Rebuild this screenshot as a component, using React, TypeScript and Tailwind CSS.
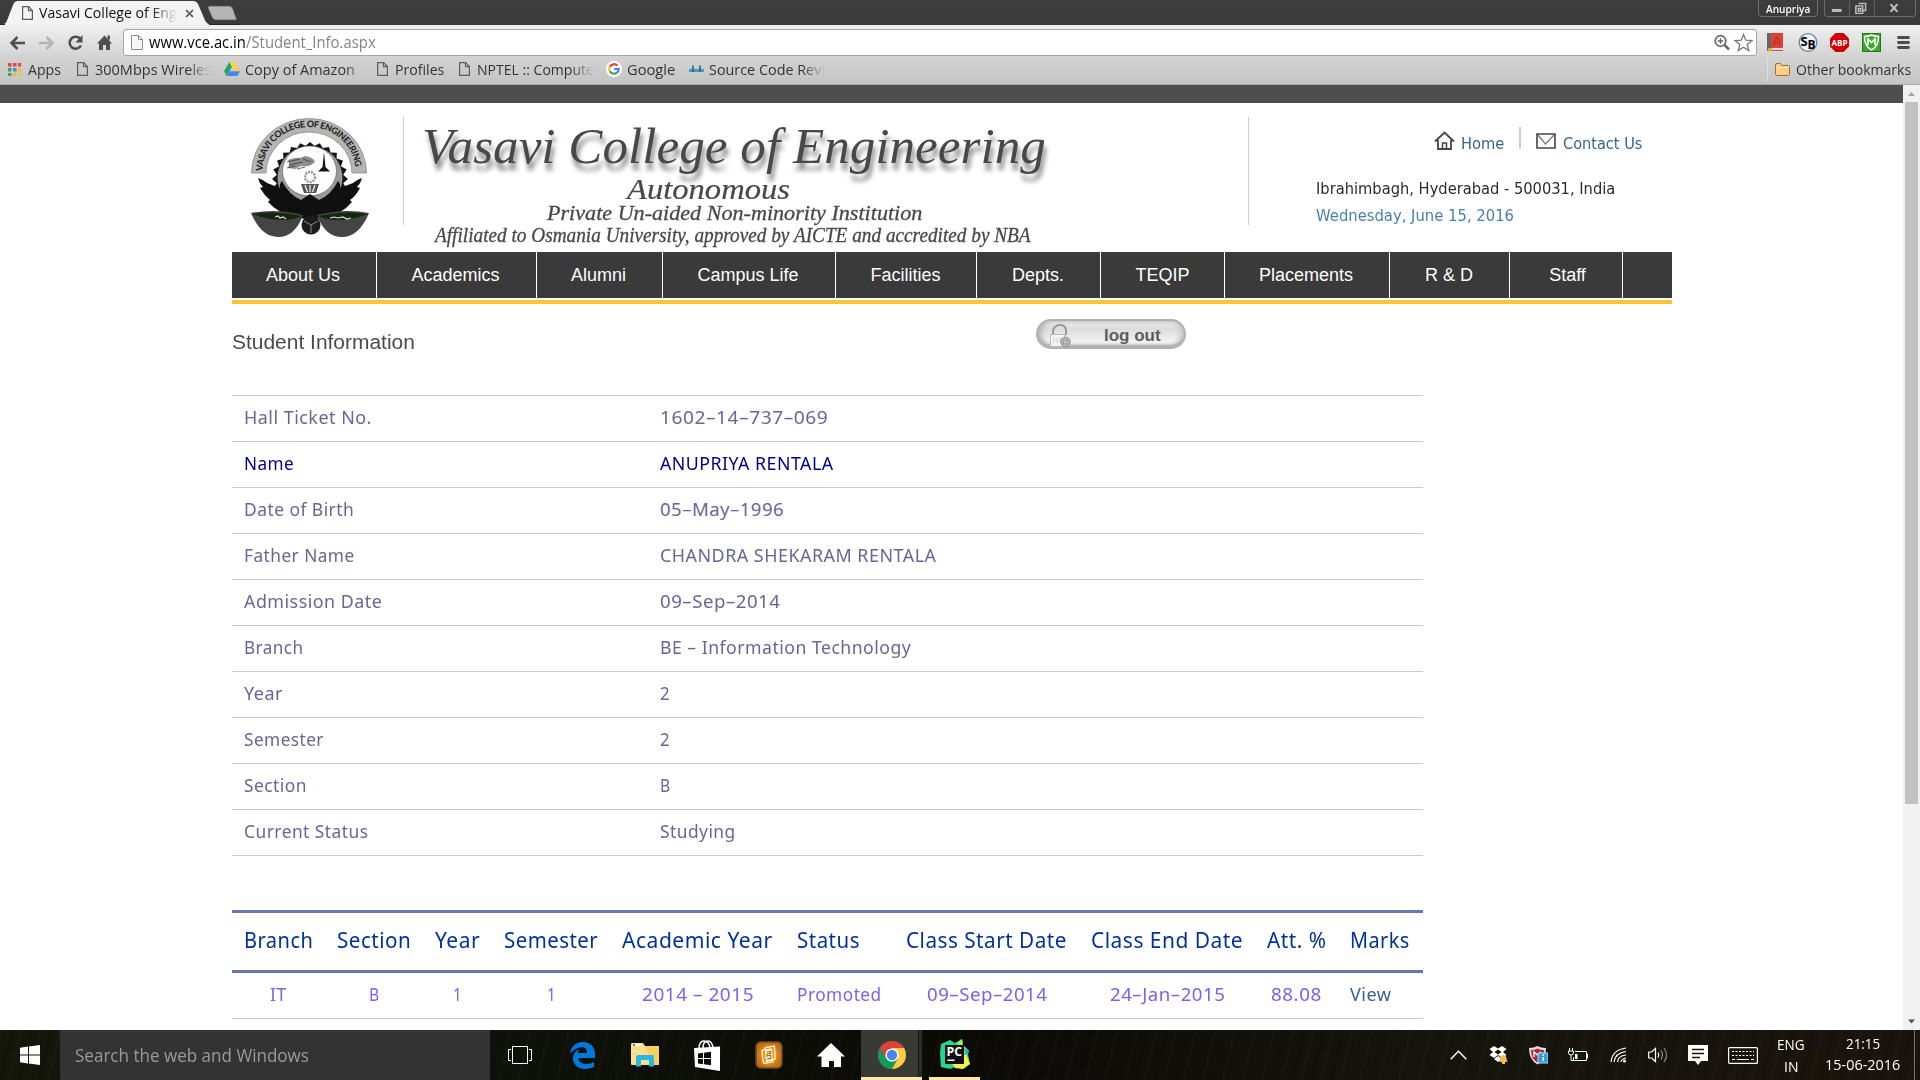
import { useLayoutEffect, useRef, useState, type ReactNode } from 'react';

/* Text squeezed or stretched horizontally to a given advance width. */
function Fit({ w, className = '', children }: { w: number; className?: string; children: ReactNode }) {
  const ref = useRef<HTMLSpanElement>(null);
  const [scale, setScale] = useState(1);
  useLayoutEffect(() => {
    if (ref.current && ref.current.offsetWidth) setScale(w / ref.current.offsetWidth);
  }, [w]);
  return (
    <span className={`block shrink-0 whitespace-nowrap ${className}`} style={{ width: w }}>
      <span ref={ref} className="inline-block origin-left whitespace-pre" style={{ transform: `scaleX(${scale})` }}>
        {children}
      </span>
    </span>
  );
}

function FileIcon({ className = '' }: { className?: string }) {
  return (
    <svg className={`shrink-0 ${className}`} width="11" height="14" viewBox="0 0 11 14" fill="none" stroke="#5c5c5c" strokeWidth="1.200">
      <path d="M.600.600h6l3.800 4v8.800H.600z" />
      <path d="M6.500.600v4h4" />
    </svg>
  );
}

function GoogleIcon() {
  return (
    <svg width="16" height="16" viewBox="0 0 16 16" className="shrink-0" fill="none" strokeWidth="2.200">
      <circle cx="8" cy="8" r="8" fill="#fff" />
      <path d="M11.400 4.600A4.800 4.800 0 0 0 3.800 5.800" stroke="#ea4335" />
      <path d="M3.800 5.800a4.800 4.800 0 0 0 0 4.400" stroke="#fbbc05" />
      <path d="M3.800 10.200a4.800 4.800 0 0 0 7.200 1.500" stroke="#34a853" />
      <path d="M11 11.700A4.800 4.800 0 0 0 12.800 8H8.200" stroke="#4285f4" />
    </svg>
  );
}

const fade = '[mask-image:linear-gradient(90deg,#000_80%,transparent_100%)]';

function TitleBar() {
  return (
    <div className="relative flex h-[25px] items-start bg-linear-to-b from-[#3d3d3d] to-[#3a3a3a]">
      <svg width="240" height="25" viewBox="0 0 240 25" className="absolute left-0 top-0">
        <path d="M0 25C6 24 6 23 8 18L13 5Q14.500 1 18 1H193Q197 1 198.500 5L204 18Q206 24 211 25z" fill="#f3f3f3" />
        <path d="M0 24.500H5M209 24.500H240" stroke="#262626" />
        <path d="M210 6h19q3 0 4 3l3.500 10q.5 1-1.500 1h-19q-3 0-4-3l-4-9q-.5-2 2-2z" fill="#b5b5b5" stroke="#555" strokeWidth=".7" />
      </svg>
      <div className="relative flex w-[212px] items-center pl-[22px] pt-[2px] text-[#111]">
        <FileIcon />
        <Fit w={138} className={`ml-[6px] h-[22px] text-[15px] leading-[21px] ${fade}`}>Vasavi College of Eng</Fit>
        <svg width="9" height="9" viewBox="0 0 9 9" className="ml-[8px]" stroke="#555" strokeWidth="1.700">
          <path d="M1 1l7 7M8 1L1 8" />
        </svg>
      </div>
      <div className="ml-auto mr-[6px] flex h-[17px] rounded-b border border-t-0 border-[#6d6d6d]">
        <Fit w={44} className="mx-[7px] text-[11.5px] font-semibold leading-[17px] text-white">Anupriya</Fit>
      </div>
      <div className="mr-[4px] flex h-[17px] w-[92px] rounded-b border border-t-0 border-[#6d6d6d]">
        <svg width="92" height="16" viewBox="0 0 92 16" fill="none" stroke="#bdbdbd" strokeWidth="1.500">
          <path d="M25 0v16M50.500 0v16" stroke="#666" strokeWidth="1" />
          <rect x="7" y="9" width="10" height="3" fill="#bdbdbd" stroke="none" />
          <path d="M34.500 3.500h7v7h-2.500M31.500 6h7v7.500h-7zM34 8.500h2.500v2.500H34z" />
          <path d="M67 4l7 8M74 4l-7 8" strokeWidth="2.200" />
        </svg>
      </div>
    </div>
  );
}

function Toolbar() {
  return (
    <div className="flex h-[32px] items-center bg-linear-to-b from-[#f0f0f0] to-[#d3d3d3] pt-[3px]">
      <svg width="123" height="28" viewBox="0 29 123 28" className="shrink-0" fill="none" stroke="#4f4f4f" strokeWidth="2.600">
        <path d="M25 43H12M17.500 37L11.500 43l6 6" />
        <path d="M39 43h13M46.500 37l6 6-6 6" stroke="#b3b3b3" />
        <path d="M80.500 39.200A6 6 0 1 0 81 45.500" />
        <path d="M82.500 35v7.500H75.500z" fill="#4f4f4f" stroke="none" />
        <path d="M97 43.500l7.500-8 7.500 8h-2V50h-4v-5h-3v5h-4v-6.500zM107.500 35.500h2.500v4h-2.500z" fill="#4f4f4f" stroke="none" />
      </svg>
      <div className="flex h-[27px] w-[1634px] shrink-0 items-center rounded-[3px] border border-[#a5a5a5] bg-white pl-[7px]">
        <svg width="12" height="15" viewBox="0 0 12 15" fill="#f5f5f5" stroke="#8b8b8b">
          <path d="M.5.500h7l4 4v10H.5zM7.500.500v4h4" />
        </svg>
        <Fit w={97} className="-mt-px ml-[6px] text-[16px] leading-6 text-black">www.vce.ac.in</Fit>
        <Fit w={130} className="-mt-px text-[16px] leading-6 text-[#848484]">/Student_Info.aspx</Fit>
        <svg width="40" height="22" viewBox="0 0 40 22" className="ml-auto mr-[3px]" fill="none" stroke="#666">
          <circle cx="7.500" cy="9" r="5.300" strokeWidth="1.700" />
          <path d="M11.500 13l4.500 4.500" strokeWidth="2.500" />
          <path d="M4.700 9h5.600M7.500 6.200v5.600" strokeWidth="1.300" />
          <path d="M30.500 2.500l2.300 5.700 6.200.4-4.800 4 1.600 6-5.300-3.400-5.300 3.400 1.600-6-4.800-4 6.200-.4z" stroke="#777" strokeWidth="1.300" />
        </svg>
      </div>
      <svg width="163" height="28" viewBox="1757 29 163 28" className="shrink-0">
        <path d="M1767 33h4v18h-4z" fill="#666" />
        <path d="M1771 33h12v15h-12zM1772 50h11v1h-11z" fill="#dc4437" />
        <path d="M1768 48h4v4l-2-1.500-2 1.500z" fill="#e9a72b" />
        <text x="1772" y="46" fontSize="14" fontWeight="bold" fill="#c4362c">A</text>
        <circle cx="1808" cy="42.500" r="8.800" fill="#eef3f8" stroke="#6b87a5" strokeWidth="1.300" />
        <text x="1800.500" y="46" fontSize="13" fontWeight="bold">S</text>
        <text x="1807.500" y="48.500" fontSize="12" fontWeight="bold">B</text>
        <path d="M1835.500 33h8l5.500 5.500v8l-5.500 5.500h-8l-5.500-5.500v-8z" fill="#cf0000" />
        <text x="1831.500" y="46.300" fontSize="9.500" fontWeight="bold" fill="#fff" textLength="16" lengthAdjust="spacingAndGlyphs">ABP</text>
        <rect x="1862.500" y="33.500" width="18" height="18" fill="#3da829" stroke="#23771a" />
        <path d="M1864.500 36.500q4 0 7-1.500 3 1.500 7 1.500 0 10-7 13.500-7-3.500-7-13.500z" fill="#3da829" stroke="#fff" strokeWidth="1.500" />
        <path d="M1868 45v-6l3.500 3.500L1875 39v6" fill="none" stroke="#fff" strokeWidth="1.700" />
        <path d="M1898.500 37.500h10M1898.500 42.500h10M1898.500 47.500h10" stroke="#4c4c4c" strokeWidth="2.800" strokeLinecap="round" />
      </svg>
    </div>
  );
}

function Bookmarks() {
  const label = 'text-[15px] leading-6 text-[#333]';
  return (
    <div className="flex h-[28px] items-center border-b border-[#a6a6a6] bg-linear-to-b from-[#d2d2d2] to-[#c5c5c5] pb-[3px] pl-[8px]">
      <div className="flex w-[69px] items-center">
        <svg width="13" height="13" viewBox="0 0 13 13" className="shrink-0">
          <path d="M0 0h3.500v3.500H0zM5 0h3.500v3.500H5zM10 0h3v3.500h-3z" fill="#e8453c" />
          <path d="M0 5h3.500v3.500H0zM0 10h3.500v3H0z" fill="#3aa757" />
          <path d="M5 5h3.500v3.500H5z" fill="#4688f1" />
          <path d="M10 5h3v3.500h-3zM10 10h3v3h-3zM5 10h3.500v3H5z" fill="#f9bb2d" />
        </svg>
        <Fit w={33} className={`ml-[7px] ${label}`}>Apps</Fit>
      </div>
      <div className="flex w-[147px] items-center">
        <FileIcon />
        <Fit w={116} className={`ml-[7px] ${label} ${fade}`}>300Mbps Wireles</Fit>
      </div>
      <div className="flex w-[153px] items-center">
        <svg width="16" height="14" viewBox="0 0 16 14" className="shrink-0">
          <path d="M5.300 0L0 9.300 2.700 14 8 4.700z" fill="#23a566" />
          <path d="M5.300 0h5.400L16 9.300h-5.400z" fill="#ffd04b" />
          <path d="M5.300 9.300H16L13.300 14H2.700z" fill="#4688f4" />
        </svg>
        <Fit w={110} className={`ml-[5px] ${label} [mask-image:linear-gradient(90deg,#000_90%,rgba(0,0,0,.6)_100%)]`}>Copy of Amazon</Fit>
      </div>
      <div className="flex w-[82px] items-center">
        <FileIcon />
        <Fit w={49} className={`ml-[7px] ${label}`}>Profiles</Fit>
      </div>
      <div className="flex w-[147px] items-center">
        <FileIcon />
        <Fit w={117} className={`ml-[7px] ${label} ${fade}`}>NPTEL :: Compute</Fit>
      </div>
      <div className="flex w-[83px] items-center">
        <GoogleIcon />
        <Fit w={48} className={`ml-[5px] ${label}`}>Google</Fit>
      </div>
      <div className="flex items-center">
        <svg width="15" height="8" viewBox="0 0 15 8" className="shrink-0">
          <path d="M0 4h2l2-1 1 1h5l1-1 2 1h2v3H0z" fill="#4f9ab3" />
          <path d="M3.300.5h1.400V7H3.300zM10.300.5h1.400V7h-1.400z" fill="#17627a" />
        </svg>
        <Fit w={116} className={`ml-[5px] ${label} ${fade}`}>Source Code Revi</Fit>
      </div>
      <div className="ml-auto mr-[9px] flex h-6 items-center border-l border-[#dcdfe4] pl-[7px]">
        <svg width="15" height="13" viewBox="0 0 15 13" className="shrink-0" stroke="#a5712b">
          <path d="M.5 11V2Q.5.500 2 .500h3.500l1.500 2h6.500q1 0 1 1V11q0 1.500-1 1.500H2Q.5 12.500.5 11z" fill="#fbcf82" />
          <path d="M1.500 4.500h12" stroke="#fdecc8" />
        </svg>
        <Fit w={115} className={`ml-[6px] ${label}`}>Other bookmarks</Fit>
      </div>
    </div>
  );
}

function CollegeCrest() {
  const teeth = Array.from({ length: 24 }, (_, i) => {
    const a = (i * Math.PI) / 12 - Math.PI / 2;
    const b = a + Math.PI / 24;
    return `${59 + 38 * Math.cos(a)},${61 + 37 * Math.sin(a)} ${59 + 33.500 * Math.cos(b)},${61 + 33.500 * Math.sin(b)}`;
  }).join(' ');
  return (
    <svg width="120" height="120" viewBox="0 0 120 120" className="mt-px shrink-0">
      <path d="M.5 55A57 54 0 0 1 115.500 55H101A43 41 0 0 0 15 55z" fill="#b5b5b5" stroke="#8a8a8a" strokeWidth=".8" />
      <path id="crest-arc" d="M11.500 53A46.500 44 0 0 1 104.500 53" fill="none" />
      <text fontFamily="Lato" fontSize="9" fontWeight="900" fill="#262626">
        <textPath href="#crest-arc" textLength="138">VASAVI COLLEGE OF ENGINEERING</textPath>
      </text>
      <polygon points={teeth} fill="#141414" />
      <ellipse cx="59" cy="60" rx="32.500" ry="32" fill="#9a9a9a" />
      <ellipse cx="58.500" cy="53" rx="27" ry="25" fill="#fdfdfd" stroke="#555" strokeWidth=".6" />
      <path d="M37 42q8-3 12-2l5-2q8 1 10 6l-4 3q-4 2-10 1l-6 3-7-1q2-4 0-8z" fill="#8d8d8d" />
      <path d="M36 44l13-3M38 47l14-3M36 50l8-2M46 51l8-2M52 41l8 3" stroke="#3a3a3a" strokeWidth=".8" />
      <path d="M73 34l1.500 15 4.500 4.500H67l4.500-4.500z" fill="#151515" />
      <circle cx="59" cy="59" r="5" fill="none" stroke="#999" strokeWidth="2.500" strokeDasharray="2 1" />
      <path d="M50 66h18l-3 9H53z" fill="#555" />
      <path d="M54 67l2.500 7M59 67v7M64 67l-2.500 7" stroke="#eee" strokeWidth="1.300" />
      <path d="M59 76l9 6q12-5 19-19 3 3 2 7l13-5q3-3 9-5-1 5-5 9l3 1q-4 8-10 12l2 2q-11 13-27 15-15 4-30 0-16-3-27-15l2-2q-6-5-10-12l3-1q-4-4-5-9 6 2 9 5l13 5q-1-4 2-7 7 14 19 19z" fill="#101010" />
      <path d="M0 95q25-5 52 2-8 22-25 22Q10 119 0 95z" fill="#444" />
      <path d="M118 95q-25-5-52 2 8 22 25 22 17 0 27-24z" fill="#444" />
      <path d="M1 96q25-4 50 2-20 9-50-2zM117 96q-25-4-50 2 20 9 50-2z" fill="#12290c" />
      <path d="M24 99l3-1 2 2 3-1 3 2M79 100l4-1 4 1 5-1 4 2 4-1" fill="none" stroke="#ddd" strokeWidth="1.200" />
      <circle cx="60" cy="107" r="9.500" fill="#1c1c1c" />
      <path d="M53 103l7 4 7-4M60 107v8" fill="none" stroke="#888" strokeWidth="1" />
    </svg>
  );
}

function Header() {
  return (
    <header className="flex h-[149px] w-[1440px] pt-[14px]">
      <div className="w-[171px] pl-[19px]"><CollegeCrest /></div>
      <div className="h-[108px] w-px bg-[#cfcfcf]" />
      <div className="w-[844px] font-['Liberation_Serif',serif] italic text-[#484848]">
        <Fit w={624} className="ml-[18px] h-[58px] text-[51px] leading-[58px] [text-shadow:2px_7px_5px_rgba(0,0,0,.5)]">Vasavi College of Engineering</Fit>
        <Fit w={163} className="ml-[223px] mt-[2px] h-[24px] text-[29px] leading-[24px] [-webkit-text-stroke:.2px]">Autonomous</Fit>
        <Fit w={375} className="ml-[143px] mt-px h-[22px] text-[22px] leading-[22px] [-webkit-text-stroke:.3px]">Private Un-aided Non-minority Institution</Fit>
        <Fit w={596} className="ml-[31px] h-[22px] text-[20px] leading-[22px] [-webkit-text-stroke:.3px]">Affiliated to Osmania University, approved by AICTE and accredited by NBA</Fit>
      </div>
      <div className="h-[108px] w-px bg-[#cfcfcf]" />
      <div className="pl-[67px] pt-[10px] font-['DejaVu_Sans',sans-serif] text-[16px] leading-[26px]">
        <div className="flex h-[45px] pl-[118px] text-[#34648f]">
          <svg width="21" height="19" viewBox="0 0 21 19" className="mt-[4px]" fill="none" stroke="#444" strokeWidth="1.800">
            <path d="M1 10.500L10.500 1.500l9.500 9M4 9v9h13V9" />
            <path d="M8.500 18v-6h4v6" strokeWidth="1.500" />
          </svg>
          <Fit w={43} className="ml-[6px] pt-[4px]">Home</Fit>
          <div className="ml-[15px] h-[22px] w-[2px] bg-[#ccc]" />
          <svg width="20" height="16" viewBox="0 0 20 16" className="ml-[15px] mt-[6px]" fill="none" stroke="#444" strokeWidth="1.600">
            <path d="M1 1h18v14H1z" />
            <path d="M2 2l7.500 9L18 2" stroke="#777" strokeWidth="1.300" />
          </svg>
          <Fit w={79} className="ml-[7px] pt-[4px]">Contact Us</Fit>
        </div>
        <Fit w={299} className="h-[27px] pt-[4px] text-[#2b2b2b]">Ibrahimbagh, Hyderabad - 500031, India</Fit>
        <Fit w={198} className="pt-[4px] text-[#4680b0]">Wednesday, June 15, 2016</Fit>
      </div>
    </header>
  );
}

function Nav() {
  const item = 'flex items-center justify-center border-r border-white';
  return (
    <nav className="w-[1440px] border-b-4 border-[#f9c535] pb-[2px]">
      <div className="flex h-[46px] bg-[#3a3a3a] font-['Liberation_Sans',sans-serif] text-[18px] text-white">
        <div className={`w-[145px] pr-[2px] ${item}`}>About Us</div>
        <div className={`w-[160px] pr-[2px] ${item}`}>Academics</div>
        <div className={`w-[126px] pr-[2px] ${item}`}>Alumni</div>
        <div className={`w-[173px] pr-[2px] ${item}`}>Campus Life</div>
        <div className={`w-[141px] pr-px ${item}`}>Facilities</div>
        <div className={`w-[124px] pr-px ${item}`}>Depts.</div>
        <div className={`w-[124px] ${item}`}>TEQIP</div>
        <div className={`w-[165px] pr-[2px] ${item}`}>Placements</div>
        <div className={`w-[120px] pr-px ${item}`}>R &amp; D</div>
        <div className={`w-[113px] pl-[3px] ${item}`}>Staff</div>
      </div>
    </nav>
  );
}

function LogoutButton() {
  return (
    <div className="flex h-[30px] w-[150px] items-center rounded-full border-2 border-[#b0b0b0] bg-linear-to-b from-[#f4f4f4] via-[#dcdcdc] via-30% to-[#fdfdfd] shadow-[inset_0_-2px_3px_#aaa,inset_4px_0_5px_#bbb,inset_-4px_0_5px_#ccc]">
      <svg width="26" height="26" viewBox="0 0 26 26" className="ml-[11px] mt-[3px]" fill="none" stroke="#999">
        <path d="M4 12V8q1-6 7-6 6 0 6 6v4" strokeWidth="2" />
        <rect x="1.500" y="11.500" width="14" height="12" fill="#f4f4f4" stroke="#bbb" />
        <path d="M5 15v5M8 15v5M11 14v4" stroke="#ccc" />
        <circle cx="16.500" cy="19" r="4.500" fill="#c4c4c4" strokeWidth="1.500" />
        <path d="M14.500 17h4v4h-4z" />
      </svg>
      <Fit w={57} className="ml-[29px] mt-[4px] font-['Liberation_Sans',sans-serif] text-[17px] font-bold leading-6 text-[#5c5c5c]">log out</Fit>
    </div>
  );
}

const info: [string, number, string, number][] = [
  ['Hall Ticket No.', 128, '1602–14–737–069', 168],
  ['Name', 50, 'ANUPRIYA RENTALA', 174],
  ['Date of Birth', 110, '05–May–1996', 124],
  ['Father Name', 111, 'CHANDRA SHEKARAM RENTALA', 276],
  ['Admission Date', 138, '09–Sep–2014', 120],
  ['Branch', 59, 'BE – Information Technology', 251],
  ['Year', 39, '2', 10],
  ['Semester', 80, '2', 10],
  ['Section', 63, 'B', 11],
  ['Current Status', 125, 'Studying', 76],
];

function InfoTable() {
  return (
    <div className="w-[1191px] border-t border-[#c9c9c9] text-[18.5px] leading-[42px] tracking-[.5px]">
      {info.map(([k, kw, v, vw]) => (
        <div key={k} className={`flex h-[46px] border-b border-[#c9c9c9] pl-[12px] ${k === 'Name' ? 'text-[#00008b]' : 'text-[#666699]'}`}>
          <div className="w-[416px]"><Fit w={kw}>{k}</Fit></div>
          <Fit w={vw}>{v}</Fit>
        </div>
      ))}
    </div>
  );
}

function MarksTable() {
  return (
    <div className="w-[1191px] tracking-[.5px]">
      <div className="flex h-[63px] gap-x-[24px] border-y-[3px] border-[#6678b1] pl-[12px] text-[21.500px] leading-[54px] text-[#003399]">
        <Fit w={69}>Branch</Fit>
        <Fit w={74}>Section</Fit>
        <Fit w={45}>Year</Fit>
        <Fit w={94}>Semester</Fit>
        <Fit w={151}>Academic Year</Fit>
        <Fit w={63}>Status</Fit>
        <Fit w={161} className="ml-[22px]">Class Start Date</Fit>
        <Fit w={152}>Class End Date</Fit>
        <Fit w={59}>Att. %</Fit>
        <Fit w={60}>Marks</Fit>
      </div>
      <div className="flex h-[46px] gap-x-[24px] border-b border-[#c9c9c9] pl-[12px] text-[18.5px] leading-[42px] text-[#7b61f0]">
        <div className="flex w-[69px] justify-center"><Fit w={17}>IT</Fit></div>
        <div className="flex w-[74px] justify-center"><Fit w={11}>B</Fit></div>
        <div className="flex w-[45px] justify-center"><Fit w={9}>1</Fit></div>
        <div className="flex w-[94px] justify-center"><Fit w={9}>1</Fit></div>
        <div className="flex w-[151px] justify-center"><Fit w={112}>2014 – 2015</Fit></div>
        <div className="w-[85px]"><Fit w={85}>Promoted</Fit></div>
        <div className="flex w-[161px] justify-center"><Fit w={120}>09–Sep–2014</Fit></div>
        <div className="flex w-[152px] justify-center"><Fit w={115}>24–Jan–2015</Fit></div>
        <div className="flex w-[59px] justify-center"><Fit w={51}>88.08</Fit></div>
        <Fit w={41} className="text-[#34648f]">View</Fit>
      </div>
    </div>
  );
}

function Scrollbar() {
  return (
    <div className="flex w-[17px] flex-col items-center bg-[#f1f1f1]">
      <svg width="17" height="17" viewBox="0 0 17 17"><path d="M5 11h7l-3.500-4z" fill="#a3a3a3" /></svg>
      <div className="h-[702px] w-[13px] bg-[#c1c1c1]" />
      <svg width="17" height="17" viewBox="0 0 17 17" className="mt-auto"><path d="M5 6.500h7l-3.500 4z" fill="#505050" /></svg>
    </div>
  );
}

function Slot({ children, className = 'w-[62px]' }: { children: ReactNode; className?: string }) {
  return <div className={`flex h-[50px] shrink-0 items-center justify-center ${className}`}>{children}</div>;
}

function Taskbar() {
  return (
    <footer className="flex h-[50px] items-center bg-[repeating-linear-gradient(104deg,rgba(90,90,50,.05)_0_2px,transparent_4px_9px,rgba(0,0,0,.1)_12px,transparent_15px_19px),linear-gradient(90deg,#15170b,#0e110a_30%,#0c0a07_50%,#15150d_75%,#1b130d)] text-white">
      <div className="w-[60px] pl-[20px]">
        <svg width="20" height="20" viewBox="0 0 20 20" fill="#fff"><path d="M0 2.700L8 1.600V9.400H0zM9 1.400L20 0v9.400H9zM0 10.600h8v7.800L0 17.300zM9 10.600h11V20L9 18.600z" /></svg>
      </div>
      <div className="flex h-[50px] w-[430px] items-center bg-[#333] pl-[15px]">
        <Fit w={234} className="text-[18px] leading-6 text-[#9a9a9a]">Search the web and Windows</Fit>
      </div>
      <Slot>
        <svg width="24" height="18" viewBox="0 0 24 18" fill="none" stroke="#fff" className="mr-[2px]">
          <path d="M4.500.500h15v17h-15zM3 3.500H.5v11H3M21 3.500h2.500v11H21" />
        </svg>
      </Slot>
      <Slot>
        <svg width="25" height="27" viewBox="0 0 25 27" fill="#0078d7" className="mr-[1px]">
          <path d="M0 12C1 4 6 0 13 0c8 0 12 6 12 12v4H8.500c0 4 4 6 8 6 3 0 5-.7 7.500-2v5c-3 1.300-6 2-9 2C8 27 3 22.500 3 16.500c0-4 2-7.500 6.500-9.500-1 1.200-1.500 2.500-1.600 4H17c0-4-2-5.700-5-5.700-5 0-9 3-12 6.700z" />
        </svg>
      </Slot>
      <Slot>
        <svg width="28" height="24" viewBox="0 0 28 24">
          <path d="M0 1q0-1 1-1h11l2 3h13q1 0 1 1v17q0 1-1 1H1q-1 0-1-1z" fill="#ffe08a" />
          <path d="M14 3h13q1 0 1 1v17q0 1-1 1h-5z" fill="#f9d163" />
          <path d="M2 1h8v2H2z" fill="#fff" /><path d="M2 1h2v2H2z" fill="#1e9be0" />
          <path d="M5 23.500V14q0-2 2-2h14q2 0 2 2v9.500h-5V17h-8v6.500z" fill="#23b7ea" />
        </svg>
      </Slot>
      <Slot>
        <svg width="27" height="31" viewBox="0 0 27 31">
          <path d="M5 9q0-8 5-8 5 0 6 7M9 8q0-7 5-7 4 0 5 7" fill="none" stroke="#fff" strokeWidth="1.500" />
          <path d="M0 8l26-1.500V31L1 27z" fill="#fff" />
          <path d="M4 13.500l5-.7V18H4zM10 12.700l7-1V18h-7zM4 19h5v5.200L4 23.500zM10 19h7v6.300l-7-1z" fill="#0a0a0a" />
        </svg>
      </Slot>
      <Slot>
        <svg width="28" height="28" viewBox="0 0 28 28">
          <defs><radialGradient id="amber"><stop offset="0" stopColor="#f9b53c" /><stop offset="1" stopColor="#c96a08" /></radialGradient></defs>
          <rect x=".8" y=".8" width="26.400" height="26.400" rx="5" fill="url(#amber)" stroke="#4a3d30" strokeWidth="1.600" />
          <path d="M7 9.500l3-1 .4-2 9-1.500.8 13-2 .5-.3 2.500-9 1.500-1-3z" fill="none" stroke="#fff2cf" strokeWidth="1.400" />
          <path d="M10 8.500l7-1.200.8 12.500-7 1.500z" fill="#fff2cf" />
          <path d="M12 11l3.500-.6v2l-3.500.8V15l3.800-.7v3l-3.500.8" fill="none" stroke="#a8690f" strokeWidth="1.100" />
        </svg>
      </Slot>
      <Slot>
        <svg width="28" height="24" viewBox="0 0 28 24" fill="#fff" className="mr-[1px]"><path d="M14 0l14 13.500h-4V24h-7v-6h-5v6H4.500V13.500H0z" /></svg>
      </Slot>
      <div className="-ml-px flex h-[50px] w-[61px] shrink-0 border-b-[3px] border-[#ffe9a8] bg-[#383a36]">
        <div className="flex w-[57px] items-center justify-center pl-[4px] pt-[2px]">
          <svg width="28" height="28" viewBox="0 0 28 28">
            <circle cx="14" cy="14" r="14" fill="#db4437" />
            <path d="M1.900 7A14 14 0 0 0 14 28l6-10.500L14 14l-6 3.500z" fill="#0f9d58" />
            <path d="M14 28A14 14 0 0 0 26.100 7H14l6 10.500z" fill="#ffcd40" />
            <circle cx="14" cy="14" r="6.600" fill="#fff" />
            <circle cx="14" cy="14" r="5.200" fill="#4687f4" />
          </svg>
        </div>
        <div className="w-[4px] border-l border-[#171815] bg-[#2b2d28]" />
      </div>
      <div className="ml-[7px] flex h-[50px] w-[51px] shrink-0 items-center justify-center border-b-[3px] border-[#ffe9a8]">
        <svg width="31" height="31" viewBox="0 0 31 31" className="mr-[1px] mt-[2px]">
          <path d="M2 5l9-4 5 3 7-4 1 6 6 6-1 3 2 10-7 5-8-2-5 2-9-2L1 14z" fill="#22d88f" />
          <path d="M18 4l5-4 1 6 6 6-4 3z" fill="#a8e854" />
          <path d="M25 9l5 3-3 5z" fill="#10b6e8" />
          <path d="M27 15l4 10-7 5-8-1-4-6z" fill="#f1f24b" />
          <rect x="6" y="6" width="19" height="19" fill="#101010" />
          <text x="7.500" y="16.500" fontFamily="Open Sans" fontSize="12" fontWeight="bold" fill="#fff" textLength="15.500" lengthAdjust="spacingAndGlyphs">PC</text>
          <path d="M8.500 20.500h7v1.500h-7z" fill="#fff" />
        </svg>
      </div>
      <Slot className="ml-auto w-10">
        <svg width="17" height="10" viewBox="0 0 17 10" fill="none" stroke="#fff" strokeWidth="1.400"><path d="M.700 9.200L8.500 1.200l7.800 8" /></svg>
      </Slot>
      <Slot className="w-10">
        <svg width="19" height="18" viewBox="0 0 19 18">
          <path d="M5 0l4 2.600L13 0l4.500 3L14 6l3.500 3L13 12 9 9l-4 3L.5 9 4 6 .5 3zM5 13l4-3 4 3-4 3z" fill="#fff" />
          <path d="M9 3.500L12.500 6 9 8.500 5.500 6z" fill="#1b150f" />
          <path d="M10 16q1.500-1 1.500-4 .5-3 3-3t3 3q0 3 1.500 4zM13 16h3v2h-3z" fill="#f3bd4c" />
        </svg>
      </Slot>
      <Slot className="w-10">
        <svg width="20" height="19" viewBox="0 0 20 19">
          <path d="M1 2q5 0 8.500-2Q13 2 18 2q0 12-8.500 16.500Q1 14 1 2z" fill="#ddd" />
          <path d="M3 4q4 0 6.500-1.500Q12 4 16 4q0 9-6.500 12.500Q3 13 3 4z" fill="#b5223b" />
          <path d="M6 11V6l3.500 3L13 6" fill="none" stroke="#eee" strokeWidth="1.500" />
          <path d="M10 7h10v10H10z" fill="#2f9fd8" stroke="#a9dcf5" />
          <path d="M14.500 11h1.500v4h-1.500zM14.500 8.500h1.500V10h-1.500z" fill="#fff" />
        </svg>
      </Slot>
      <Slot className="w-10">
        <svg width="20" height="14" viewBox="0 0 20 14" fill="none" stroke="#fff">
          <path d="M7 3.500h11.500v9h-13V9M18.500 6h1v4h-1M1.500 0v3M4.500 0v3M.5 3h5v2q0 2-2.500 2T.5 5zM3 7v5.500h2.500" />
          <path d="M7 6h2.500v5H7z" fill="#fff" stroke="none" />
        </svg>
      </Slot>
      <Slot className="w-10">
        <svg width="17" height="16" viewBox="0 0 17 16" fill="none" stroke="#fff" strokeWidth="1.200">
          <path d="M1 15Q2 3 16 1M4 15Q5 6 16 4.500M7.500 15Q8 9 16 8M11 15q.5-3.500 5-4" />
          <circle cx="14.500" cy="14" r="1.500" fill="#fff" stroke="none" />
        </svg>
      </Slot>
      <Slot className="w-10">
        <svg width="20" height="18" viewBox="0 0 20 18" fill="none" stroke="#fff" strokeWidth="1.200">
          <path d="M.700 6h3L7.500 2.300v13.400L3.700 12h-3zM10 6.500q1.500 2.500 0 5" />
          <path d="M13 4.500q3 4.500 0 9M16 2q5 7 0 14" stroke="#8c8c86" />
        </svg>
      </Slot>
      <Slot className="w-10">
        <svg width="20" height="20" viewBox="0 0 20 20">
          <path d="M0 0h20v16h-7l-3 4-3-4H0z" fill="#fff" />
          <path d="M4 4.500h12M4 8.500h12M4 12.500h8" stroke="#1a140e" strokeWidth="1.300" />
        </svg>
      </Slot>
      <Slot className="w-[50px]">
        <svg width="30" height="17" viewBox="0 0 30 17" fill="none" stroke="#fff">
          <rect x=".6" y=".6" width="28.800" height="15.800" rx="1" strokeWidth="1.200" />
          <path d="M4 4.500h22M4 8.500h22" strokeDasharray="2 1.500" />
          <path d="M4 12.500h3M9 12.500h12M23 12.500h3" />
        </svg>
      </Slot>
      <div className="flex w-[45px] flex-col items-center text-[15px] leading-[22px]">
        <Fit w={28}>ENG</Fit>
        <Fit w={14}>IN</Fit>
      </div>
      <div className="flex h-[50px] w-[102px] flex-col items-center border-r border-[#77736c] pr-[2px] pt-[3px] text-[15px] leading-[21px]">
        <Fit w={34}>21:15</Fit>
        <Fit w={75}>15-06-2016</Fit>
      </div>
      <div className="w-[5px]" />
    </footer>
  );
}

export default function App() {
  return (
    <div className="h-[1080px] w-[1920px] overflow-hidden bg-white font-['Open_Sans','Noto_Sans',sans-serif]">
      <TitleBar />
      <Toolbar />
      <Bookmarks />
      <div className="flex h-[945px]">
        <main className="flex-1 overflow-hidden border-t-[18px] border-[#4e4e4e]">
          <div className="pl-[232px]">
            <Header />
            <Nav />
            <div className="flex h-[91px] items-start pt-[15px]">
              <div className="w-[804px] pt-[9px] font-['Liberation_Sans',sans-serif] text-[20.500px] leading-[28px] text-[#4a4a4a]">
                <Fit w={183}>Student Information</Fit>
              </div>
              <LogoutButton />
            </div>
            <div className="font-['Noto_Sans',sans-serif]">
              <InfoTable />
              <div className="h-[54px]" />
              <MarksTable />
            </div>
          </div>
        </main>
        <Scrollbar />
      </div>
      <Taskbar />
    </div>
  );
}
